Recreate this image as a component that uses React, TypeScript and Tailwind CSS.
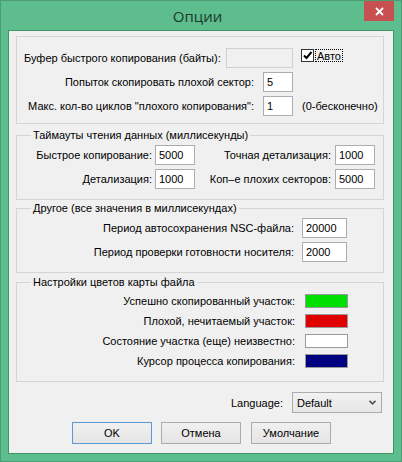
import React from "react";

function Field({ value, w }: { value: string; w: string }) {
  return (
    <div className={`${w} h-[20px] shrink-0 border border-[#abadb3] bg-white flex items-center pl-[3px] text-black`}>
      {value}
    </div>
  );
}

function Group({ title, children, className }: { title?: string; children: React.ReactNode; className: string }) {
  return (
    <div className={`ml-[7px] w-[368px] border border-[#d5d5d5] flex flex-col ${className}`}>
      {title && (
        <div className="-mt-[8px] ml-[7px] self-start h-[14px] leading-[14px] px-[2px] bg-[#f0f0f0] text-black">{title}</div>
      )}
      {children}
    </div>
  );
}

function Swatch({ label, color }: { label: string; color: string }) {
  return (
    <div className="h-[20px] flex items-center">
      <div className="w-[271px] text-right">{label}</div>
      <div className={`ml-[10px] w-[43px] h-[14px] border border-[#9a9a9a] ${color}`} />
    </div>
  );
}

export default function App() {
  return (
    <div className="w-[402px] h-[462px] bg-[#5dbd8d] border border-[#4b9c72] flex flex-col font-['Liberation_Sans',Arial,sans-serif] text-[11px] leading-[14px] text-black">
      <div className="h-[29px] grid grid-cols-[1fr_auto_1fr] pr-[7px]">
        <div />
        <div className="pt-[6px] text-[15px] leading-[18px] text-[#1b3a2a] font-['Open_Sans',sans-serif]">Опции</div>
        <div className="justify-self-end w-[30px] h-[20px] bg-[#c75050] flex items-center justify-center">
          <svg width="9" height="9" viewBox="0 0 9 9">
            <path d="M1 1 L8 8 M8 1 L1 8" stroke="white" strokeWidth="1.8" />
          </svg>
        </div>
      </div>
      <div className="mx-[7px] h-[424px] border border-[#3f9466] bg-[#f0f0f0] flex flex-col pt-[5px]">
        <Group className="pt-[11px] pb-[7px] pl-[7px]">
          <div className="h-[20px] flex items-center">
            <div className="w-[202px]">Буфер быстрого копирования (байты):</div>
            <div className="w-[67px] h-[20px] border border-[#d0d0d0] bg-[#f0f0f0]" />
            <div className="ml-[8px] self-start mt-[1px] w-[13px] h-[13px] border border-[#333333] bg-white flex items-center justify-center">
              <svg width="11" height="11" viewBox="0 0 11 11">
                <path d="M2 5.5 L4.5 8 L9.5 2" stroke="black" strokeWidth="2" fill="none" />
              </svg>
            </div>
            <div className="ml-[1px] self-start mt-[1px] px-[1px] h-[13px] leading-[12px] border border-dotted border-black">Авто</div>
          </div>
          <div className="mt-[4px] h-[20px] flex items-center">
            <div className="w-[230px] text-right">Попыток скопировать плохой сектор:</div>
            <div className="ml-[9px]"><Field value="5" w="w-[30px]" /></div>
          </div>
          <div className="mt-[4px] h-[20px] flex items-center">
            <div className="w-[230px] text-right">Макс. кол-во циклов "плохого копирования":</div>
            <div className="ml-[9px]"><Field value="1" w="w-[30px]" /></div>
            <div className="ml-[9px]">(0-бесконечно)</div>
          </div>
        </Group>

        <Group title="Таймауты чтения данных (миллисекунды)" className="mt-[11px] pb-[10px] pl-[7px]">
          <div className="mt-[3px] h-[20px] flex items-center">
            <div className="w-[128px] text-right">Быстрое копирование:</div>
            <div className="ml-[3px]"><Field value="5000" w="w-[40px]" /></div>
            <div className="w-[136px] text-right">Точная детализация:</div>
            <div className="ml-[4px]"><Field value="1000" w="w-[40px]" /></div>
          </div>
          <div className="mt-[4px] h-[20px] flex items-center">
            <div className="w-[128px] text-right">Детализация:</div>
            <div className="ml-[3px]"><Field value="1000" w="w-[40px]" /></div>
            <div className="w-[136px] text-right">Коп–е плохих секторов:</div>
            <div className="ml-[4px]"><Field value="5000" w="w-[40px]" /></div>
          </div>
        </Group>

        <Group title="Другое (все значения в миллисекундах)" className="mt-[8px] pb-[10px] pl-[7px]">
          <div className="mt-[3px] h-[20px] flex items-center">
            <div className="w-[270px] text-right">Период автосохранения NSC-файла:</div>
            <div className="ml-[8px]"><Field value="20000" w="w-[45px]" /></div>
          </div>
          <div className="mt-[4px] h-[20px] flex items-center">
            <div className="w-[270px] text-right">Период проверки готовности носителя:</div>
            <div className="ml-[8px]"><Field value="2000" w="w-[45px]" /></div>
          </div>
        </Group>

        <Group title="Настройки цветов карты файла" className="mt-[9px] pb-[10px] pl-[7px]">
          <div className="mt-[2px]" />
          <Swatch label="Успешно скопированный участок:" color="bg-[#00e000]" />
          <Swatch label="Плохой, нечитаемый участок:" color="bg-[#e00000]" />
          <Swatch label="Состояние участка (еще) неизвестно:" color="bg-white" />
          <Swatch label="Курсор процесса копирования:" color="bg-[#000080]" />
        </Group>

        <div className="mt-[10px] h-[21px] flex items-center justify-end pr-[11px]">
          <div>Language:</div>
          <div className="ml-[9px] w-[90px] h-[21px] border border-[#acacac] bg-gradient-to-b from-[#f2f2f2] to-[#e6e6e6] flex items-center pl-[4px] pr-[5px]">
            <div className="flex-1">Default</div>
            <svg width="7" height="5" viewBox="0 0 7 5">
              <path d="M0.5 0.8 L3.5 3.8 L6.5 0.8" stroke="#555" strokeWidth="1.6" fill="none" />
            </svg>
          </div>
        </div>

        <div className="mt-[9px] h-[22px] flex pl-[63px]">
          <div className="w-[80px] h-[22px] border border-[#5a9ad6] bg-gradient-to-b from-[#f0f0f0] to-[#e5e5e5] flex items-center justify-center">OK</div>
          <div className="ml-[9px] w-[80px] h-[22px] border border-[#acacac] bg-gradient-to-b from-[#f0f0f0] to-[#e5e5e5] flex items-center justify-center">Отмена</div>
          <div className="ml-[10px] w-[80px] h-[22px] border border-[#acacac] bg-gradient-to-b from-[#f0f0f0] to-[#e5e5e5] flex items-center justify-center">Умолчание</div>
        </div>
      </div>
    </div>
  );
}
